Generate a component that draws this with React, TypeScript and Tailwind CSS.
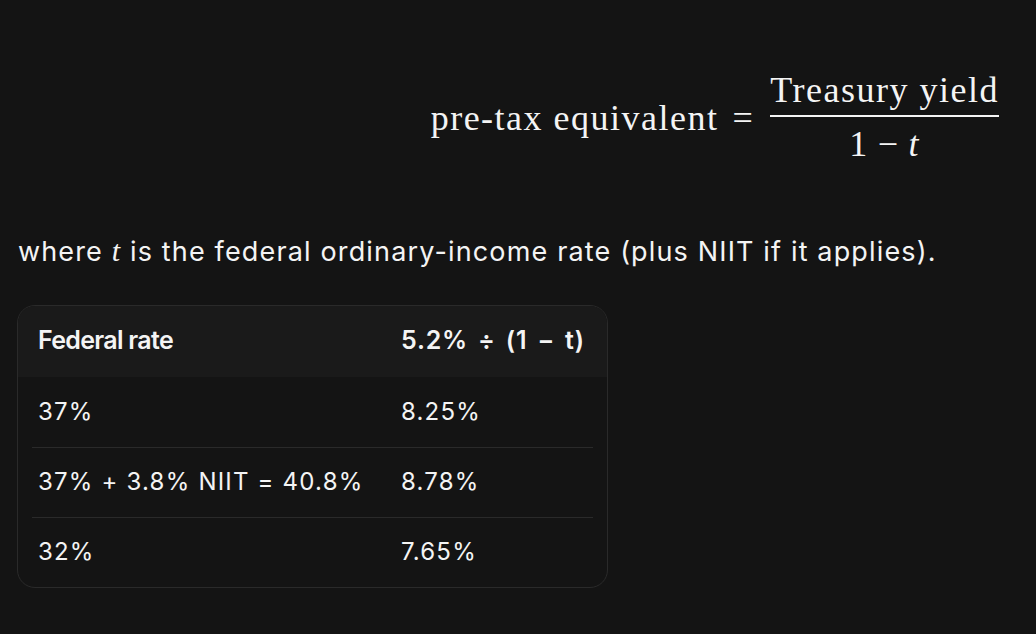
const rows = [
  { rate: "37%", value: "8.25%" },
  { rate: "37% + 3.8% NIIT = 40.8%", value: "8.78%" },
  { rate: "32%", value: "7.65%" },
];

const serif = "font-['Liberation_Serif',serif]";

export default function App() {
  return (
    <div className="min-h-screen w-full bg-[#141414] text-[#f4f4f4] font-['Inter',sans-serif]">
      {/* display math */}
      <div className="flex justify-end pr-[35px] pt-[72px]">
        <div className={`flex items-center ${serif} text-[36px] leading-none tracking-[1.5px]`}>
          <span className="pt-[2px]">pre-tax equivalent</span>
          <span className="mx-[14px] pt-[2px]">=</span>
          <div className="flex flex-col items-center px-[2px]">
            <span className="pb-[7px]">Treasury yield</span>
            <div className="h-[1.5px] w-full bg-[#f4f4f4]" />
            <span className="pt-[9px]">
              1<span className="mx-[9px]">−</span>
              <span className="italic">t</span>
            </span>
          </div>
        </div>
      </div>

      <p className="mt-[72px] pl-[18px] text-[27px] leading-[34px] tracking-[1.15px]">
        where <span className={`${serif} italic text-[30px]`}>t</span> is the federal
        ordinary-income rate (plus NIIT if it applies).
      </p>

      {/* rate table */}
      <div className="ml-[17px] mt-[36px] w-[591px] overflow-hidden rounded-[18px] border border-[#2a2a2a]">
        <div className="flex h-[71px] items-center bg-[#1a1a1a] text-[25px] font-semibold">
          <div className="w-[363px] pl-[20px] tracking-[-0.7px]">Federal rate</div>
          <div className="pl-[20px] tracking-[0.8px] [word-spacing:3px]">5.2% ÷ (1 − t)</div>
        </div>
        <div className="mx-[14px] text-[24px] tracking-[1.2px]">
          {rows.map((r, i) => (
            <div
              key={r.rate}
              className={`flex h-[70px] items-center ${i > 0 ? "border-t border-[#2a2a2a]" : ""}`}
            >
              <div className="w-[349px] pl-[6px]">{r.rate}</div>
              <div className="pl-[20px]">{r.value}</div>
            </div>
          ))}
        </div>
      </div>
    </div>
  );
}
